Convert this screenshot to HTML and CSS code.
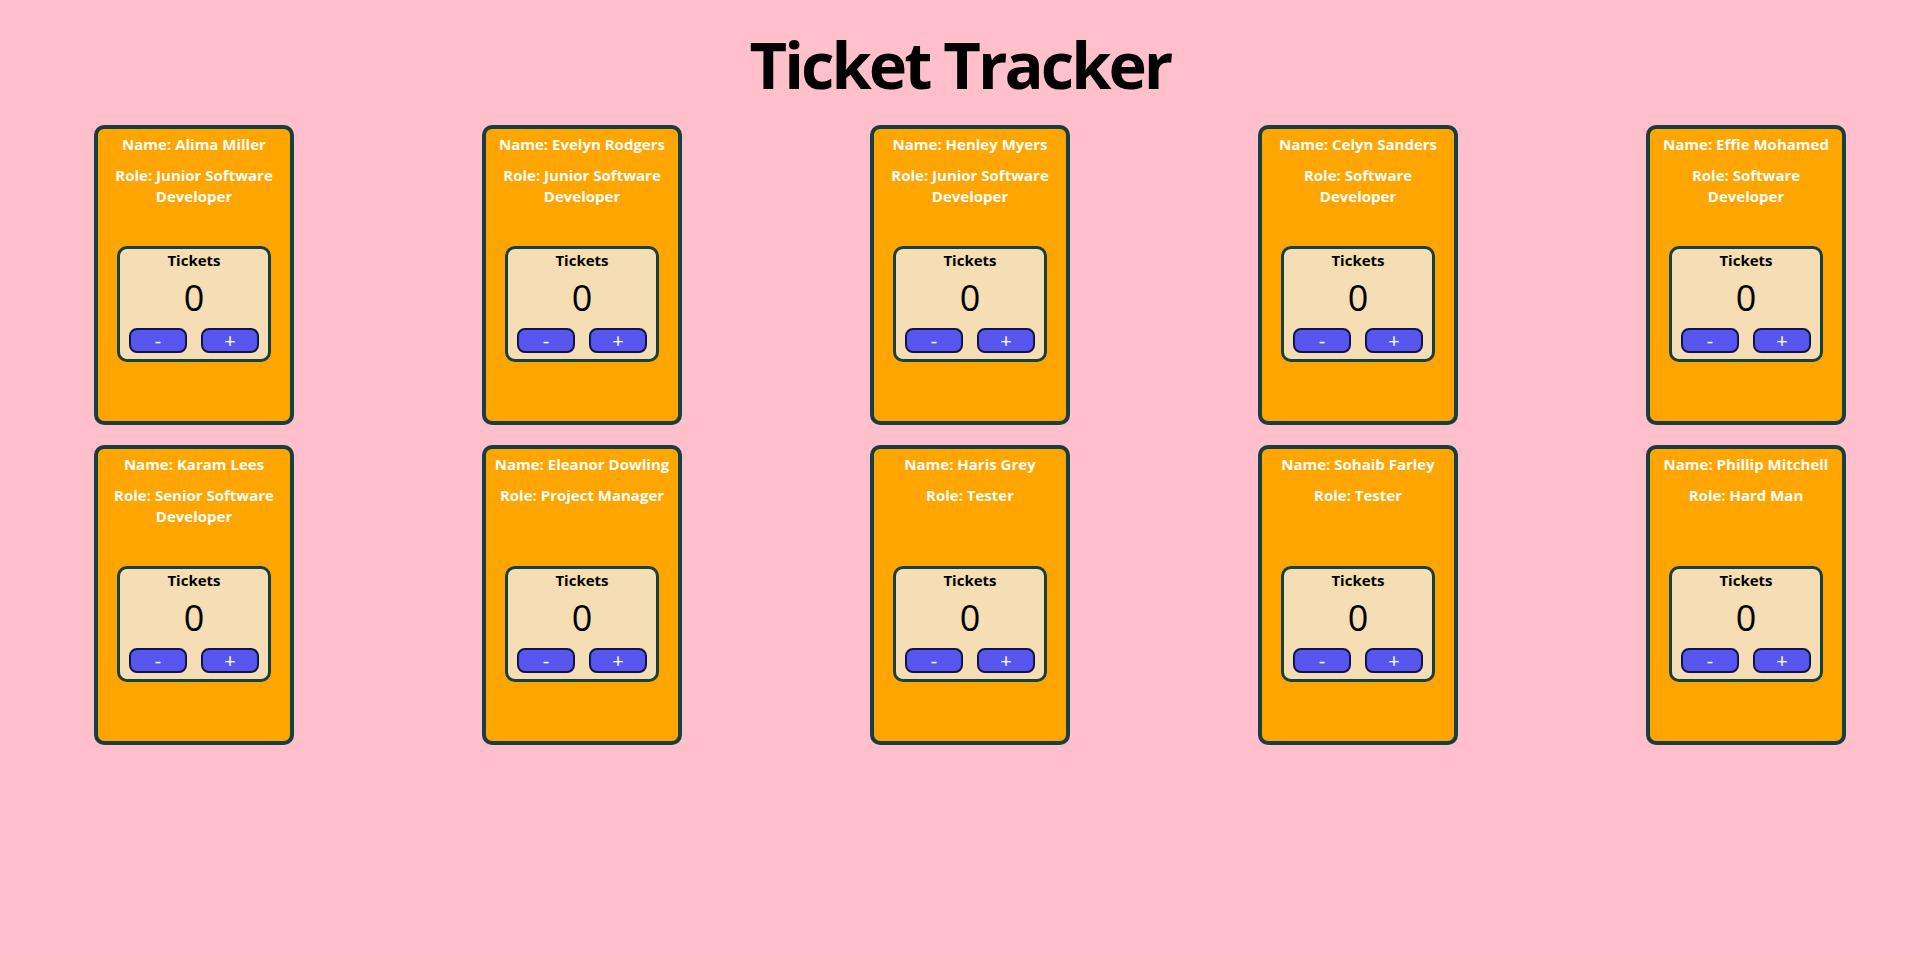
FILE: index.html
```html
<!DOCTYPE html>
<html lang="en">
<head>
<meta charset="utf-8">
<title>Ticket Tracker</title>
<link rel="stylesheet" href="styles.css">
</head>
<body>
<h1 class="title">Ticket Tracker</h1>
<main class="grid">
  <div class="card"><p class="name">Name: Alima Miller</p><p class="role">Role: Junior Software Developer</p><div class="tickets"><p class="tickets-label">Tickets</p><p class="count">0</p><div class="btns"><button class="btn">-</button><button class="btn">+</button></div></div></div>
  <div class="card"><p class="name">Name: Evelyn Rodgers</p><p class="role">Role: Junior Software Developer</p><div class="tickets"><p class="tickets-label">Tickets</p><p class="count">0</p><div class="btns"><button class="btn">-</button><button class="btn">+</button></div></div></div>
  <div class="card"><p class="name">Name: Henley Myers</p><p class="role">Role: Junior Software Developer</p><div class="tickets"><p class="tickets-label">Tickets</p><p class="count">0</p><div class="btns"><button class="btn">-</button><button class="btn">+</button></div></div></div>
  <div class="card"><p class="name">Name: Celyn Sanders</p><p class="role">Role: Software Developer</p><div class="tickets"><p class="tickets-label">Tickets</p><p class="count">0</p><div class="btns"><button class="btn">-</button><button class="btn">+</button></div></div></div>
  <div class="card"><p class="name">Name: Effie Mohamed</p><p class="role">Role: Software Developer</p><div class="tickets"><p class="tickets-label">Tickets</p><p class="count">0</p><div class="btns"><button class="btn">-</button><button class="btn">+</button></div></div></div>
  <div class="card"><p class="name">Name: Karam Lees</p><p class="role">Role: Senior Software Developer</p><div class="tickets"><p class="tickets-label">Tickets</p><p class="count">0</p><div class="btns"><button class="btn">-</button><button class="btn">+</button></div></div></div>
  <div class="card"><p class="name">Name: Eleanor Dowling</p><p class="role">Role: Project Manager</p><div class="tickets"><p class="tickets-label">Tickets</p><p class="count">0</p><div class="btns"><button class="btn">-</button><button class="btn">+</button></div></div></div>
  <div class="card"><p class="name">Name: Haris Grey</p><p class="role">Role: Tester</p><div class="tickets"><p class="tickets-label">Tickets</p><p class="count">0</p><div class="btns"><button class="btn">-</button><button class="btn">+</button></div></div></div>
  <div class="card"><p class="name">Name: Sohaib Farley</p><p class="role">Role: Tester</p><div class="tickets"><p class="tickets-label">Tickets</p><p class="count">0</p><div class="btns"><button class="btn">-</button><button class="btn">+</button></div></div></div>
  <div class="card"><p class="name">Name: Phillip Mitchell</p><p class="role">Role: Hard Man</p><div class="tickets"><p class="tickets-label">Tickets</p><p class="count">0</p><div class="btns"><button class="btn">-</button><button class="btn">+</button></div></div></div>
</main>
</body>
</html>
```

FILE: styles.css
```css
html, body {
  margin: 0;
  padding: 0;
}

body {
  background: #ffc0cb;
  font-family: "Open Sans", "Noto Sans", sans-serif;
  color: #000;
  min-height: 955px;
}

.title {
  margin: 20px 0 0;
  font-size: 65px;
  line-height: 88px;
  font-weight: 700;
  text-align: center;
  letter-spacing: -3px;
}

.grid {
  display: grid;
  grid-template-columns: repeat(5, 200px);
  column-gap: 188px;
  row-gap: 20px;
  padding-left: 94px;
  margin-top: 17px;
}

.card {
  box-sizing: border-box;
  width: 200px;
  height: 300px;
  background: #ffa500;
  border: 4px solid #183f40;
  border-radius: 10px;
  display: flex;
  flex-direction: column;
  align-items: center;
  padding: 0 6px;
  color: #fff;
  text-align: center;
}

.name, .role {
  margin: 0;
  font-size: 15px;
  line-height: 21px;
  font-weight: 700;
}

.name {
  margin-top: 5px;
  white-space: nowrap;
}

.role {
  margin-top: 10px;
  height: 42px;
}

.tickets {
  box-sizing: border-box;
  margin-top: 39px;
  width: 154px;
  height: 116px;
  background: #f5deb3;
  border: 3px solid #183f40;
  border-radius: 10px;
  color: #000;
  display: flex;
  flex-direction: column;
  align-items: center;
}

.tickets-label {
  margin: 1px 0 0;
  font-size: 15px;
  line-height: 21px;
  font-weight: 700;
}

.count {
  margin: 7px 0 0;
  font-size: 36px;
  line-height: 40px;
  font-weight: 400;
}

.btns {
  display: flex;
  gap: 14px;
  margin-top: 10px;
}

.btn {
  box-sizing: border-box;
  width: 58px;
  height: 25px;
  padding: 1px 0 0;
  background: #5757f0;
  border: 2px solid #12124a;
  border-radius: 8px;
  color: #fff;
  font-family: "Open Sans", "Noto Sans", sans-serif;
  font-size: 20px;
  line-height: 20px;
}
```
